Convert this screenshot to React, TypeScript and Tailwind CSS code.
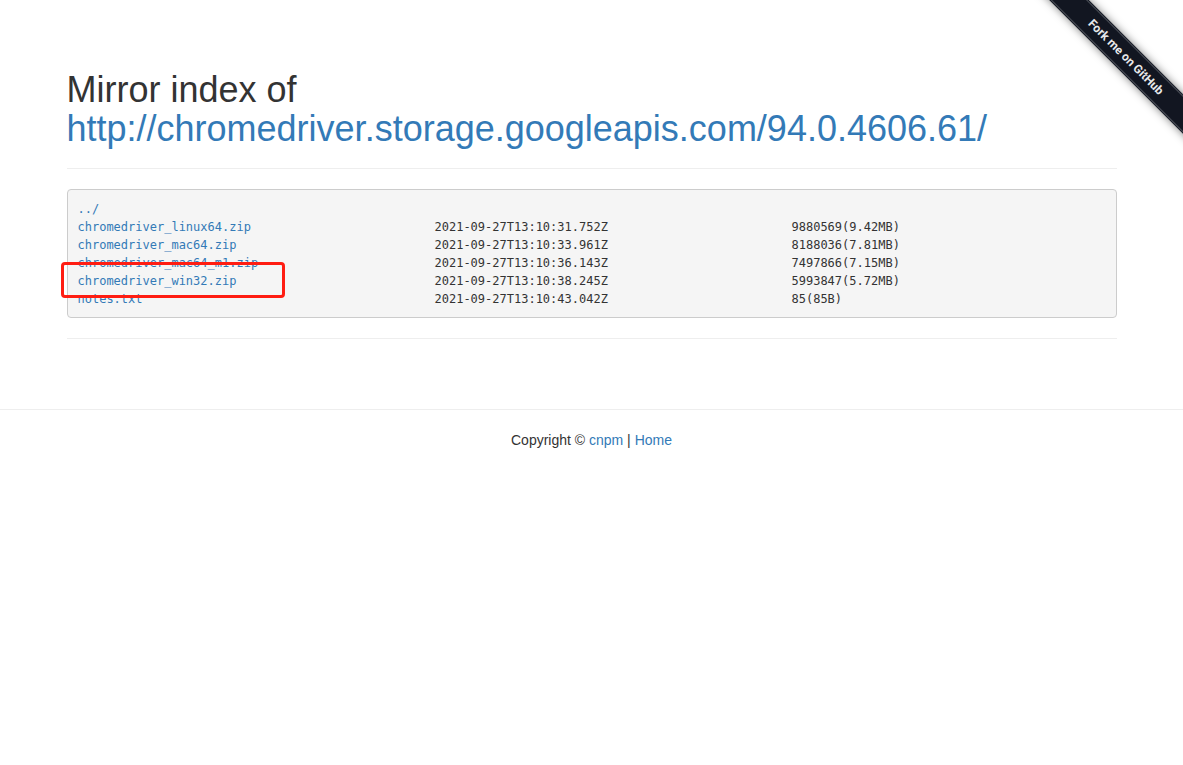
type Entry = { name: string; modified?: string; size?: string; highlighted?: boolean };

const entries: Entry[] = [
  { name: '../' },
  { name: 'chromedriver_linux64.zip', modified: '2021-09-27T13:10:31.752Z', size: '9880569(9.42MB)' },
  { name: 'chromedriver_mac64.zip', modified: '2021-09-27T13:10:33.961Z', size: '8188036(7.81MB)' },
  { name: 'chromedriver_mac64_m1.zip', modified: '2021-09-27T13:10:36.143Z', size: '7497866(7.15MB)' },
  { name: 'chromedriver_win32.zip', modified: '2021-09-27T13:10:38.245Z', size: '5993847(5.72MB)', highlighted: true },
  { name: 'notes.txt', modified: '2021-09-27T13:10:43.042Z', size: '85(85B)' },
];

function ForkRibbon() {
  return (
    <div className="pointer-events-none absolute top-0 right-0 size-[149px] overflow-hidden">
      <a
        href="#fork"
        className="pointer-events-auto absolute top-[43px] -left-[18px] flex h-7 w-[220px] rotate-45 items-center bg-[#121621] py-px font-[Roboto,sans-serif] text-[12px] font-bold text-[#e8e9eb] shadow-[0_0_8px_rgba(0,0,0,0.5)]"
      >
        <span className="flex h-full w-full items-center justify-center border-y border-[#4b4f58]">
          Fork me on GitHub
        </span>
      </a>
    </div>
  );
}

function FileTable() {
  return (
    <div className="rounded-[4px] border border-[#ccc] bg-[#f5f5f5] px-[10px] pt-[10px] pb-[9px]">
      <table
        aria-label="Files"
        className="w-full table-fixed border-collapse text-left font-['DejaVu_Sans_Mono',monospace] text-[12px] leading-[18px]"
      >
        <colgroup>
          <col className="w-[357px]" />
          <col className="w-[357px]" />
          <col />
        </colgroup>
        <tbody>
          {entries.map((entry) => (
            <tr key={entry.name}>
              <td className="relative p-0">
                <a href={`#${entry.name}`} className="text-[#337ab7] hover:underline">
                  {entry.name}
                </a>
                {entry.highlighted && (
                  <span className="pointer-events-none absolute -top-[10px] -left-[17px] z-10 h-9 w-56 rounded-[4px] border-3 border-[#ff1d12]" />
                )}
              </td>
              <td className="p-0">{entry.modified}</td>
              <td className="p-0">{entry.size}</td>
            </tr>
          ))}
        </tbody>
      </table>
    </div>
  );
}

export default function App() {
  return (
    <div className="relative min-h-screen bg-white font-['Liberation_Sans',Arial,sans-serif] text-[14px] leading-5 text-[#333]">
      <ForkRibbon />
      <main className="mx-auto max-w-[1170px] px-[60px] py-[70px]">
        <h1 className="text-[36px] leading-[39px]">
          <span className="block">Mirror index of</span>
          <a href="#index" className="block break-words text-[#337ab7] hover:underline">
            http://chromedriver.storage.googleapis.com/94.0.4606.61/
          </a>
        </h1>
        <hr className="my-5 border-[#eee]" />
        <FileTable />
        <hr className="mt-5 border-[#eee]" />
      </main>
      <footer className="border-t border-[#eee] py-5 text-center">
        Copyright © <a href="#cnpm" className="text-[#337ab7] hover:underline">cnpm</a> |{' '}
        <a href="#home" className="text-[#337ab7] hover:underline">Home</a>
      </footer>
    </div>
  );
}
